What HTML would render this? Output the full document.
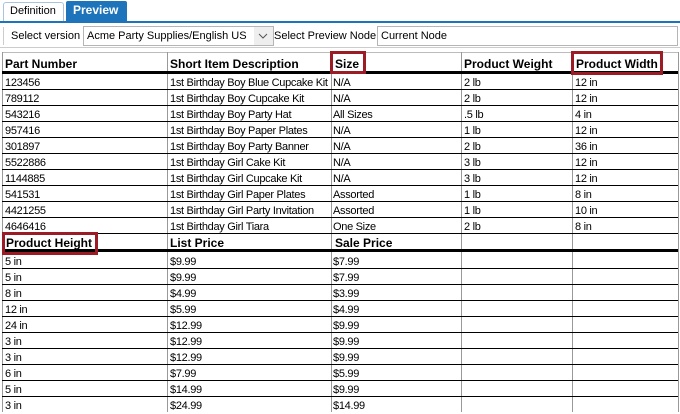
<!DOCTYPE html>
<html><head><meta charset="utf-8"><style>
*{margin:0;padding:0;box-sizing:border-box}
body{width:680px;height:412px;background:#fff;position:relative;overflow:hidden;font-family:"Liberation Sans",Tahoma,sans-serif;font-size:11px;color:#000}
.a{position:absolute;white-space:nowrap}
.t{letter-spacing:-0.3px}
.hl{position:absolute;left:2px;width:676px;height:1px;background:#000}
.vl{position:absolute;width:1px;background:#999}
.h{position:absolute;font-weight:bold;font-size:12px;white-space:nowrap}
.red{position:absolute;border:3px solid #9b1c24}
</style></head><body>
<!-- tabs -->
<div class="a" style="left:3px;top:2px;width:61px;height:20px;border:1px solid #a9c4dd;border-bottom:none;border-radius:3px 3px 0 0;background:#fff"></div>
<div class="a" style="left:10px;top:5px;font-size:11px">Definition</div>
<div class="a" style="left:66px;top:1px;width:61px;height:21px;background:#1d74bb;border-radius:2px 2px 0 0"></div>
<div class="a" style="left:73px;top:3px;color:#fff;font-weight:bold;font-size:12px">Preview</div>
<div class="a" style="left:0;top:21px;width:680px;height:2px;background:#1d74bb"></div>
<!-- toolbar -->
<div class="a" style="left:3px;top:27px;width:1px;height:18px;background:#ccc"></div>
<div class="a" style="left:11px;top:30px">Select version</div>
<div class="a" style="left:83px;top:26px;width:191px;height:20px;border:1px solid #b5b5b5;background:#fff"></div>
<div class="a" style="left:254px;top:27px;width:19px;height:18px;background:#eee"></div>
<div class="a" style="left:87px;top:30px">Acme Party Supplies/English US</div>
<svg class="a" style="left:258px;top:33px" width="10" height="7"><path d="M1 1 L5 5 L9 1" stroke="#555" fill="none"/></svg>
<div class="a" style="left:274px;top:30px">Select Preview Node</div>
<div class="a" style="left:377px;top:26px;width:301px;height:20px;border:1px solid #b5b5b5;background:#fff"></div>
<div class="a" style="left:381px;top:30px">Current Node</div>
<div class="a" style="left:0;top:47px;width:680px;height:1px;background:#ccc"></div>
<!-- table frame -->
<div class="a" style="left:2px;top:52px;width:676px;height:1px;background:#bbb"></div>
<div class="vl" style="left:2px;top:52px;height:360px"></div>
<div class="vl" style="left:167px;top:52px;height:360px"></div>
<div class="vl" style="left:331px;top:52px;height:360px"></div>
<div class="vl" style="left:461px;top:52px;height:360px"></div>
<div class="vl" style="left:572px;top:52px;height:360px"></div>
<div class="vl" style="left:678px;top:52px;height:360px"></div>
<!-- header 1 -->
<div class="h" style="left:5px;top:57px">Part Number</div>
<div class="h" style="left:170px;top:57px">Short Item Description</div>
<div class="h" style="left:335px;top:57px">Size</div>
<div class="h" style="left:464px;top:57px">Product Weight</div>
<div class="h" style="left:576px;top:57px">Product Width</div>
<div class="a" style="left:2px;top:71px;width:676px;height:3px;background:#000"></div>
<div class="red" style="left:330px;top:51px;width:36px;height:23px"></div>
<div class="red" style="left:571px;top:51px;width:92px;height:24px"></div>
<!-- rows 1 -->
<div class="hl" style="top:89px"></div><div class="hl" style="top:105px"></div><div class="hl" style="top:121px"></div><div class="hl" style="top:137px"></div><div class="hl" style="top:153px"></div><div class="hl" style="top:169px"></div><div class="hl" style="top:185px"></div><div class="hl" style="top:201px"></div><div class="hl" style="top:217px"></div><div class="hl" style="top:233px"></div>
<div class="a t" style="left:5px;top:75px;line-height:16px">123456<br>789112<br>543216<br>957416<br>301897<br>5522886<br>1144885<br>541531<br>4421255<br>4646416</div>
<div class="a t" style="left:170px;top:75px;line-height:16px">1st Birthday Boy Blue Cupcake Kit<br>1st Birthday Boy Cupcake Kit<br>1st Birthday Boy Party Hat<br>1st Birthday Boy Paper Plates<br>1st Birthday Boy Party Banner<br>1st Birthday Girl Cake Kit<br>1st Birthday Girl Cupcake Kit<br>1st Birthday Girl Paper Plates<br>1st Birthday Girl Party Invitation<br>1st Birthday Girl Tiara</div>
<div class="a t" style="left:333px;top:75px;line-height:16px">N/A<br>N/A<br>All Sizes<br>N/A<br>N/A<br>N/A<br>N/A<br>Assorted<br>Assorted<br>One Size</div>
<div class="a t" style="left:464px;top:75px;line-height:16px">2 lb<br>2 lb<br>.5 lb<br>1 lb<br>2 lb<br>3 lb<br>3 lb<br>1 lb<br>1 lb<br>2 lb</div>
<div class="a t" style="left:575px;top:75px;line-height:16px">12 in<br>12 in<br>4 in<br>12 in<br>36 in<br>12 in<br>12 in<br>8 in<br>10 in<br>8 in</div>
<!-- header 2 -->
<div class="h" style="left:6px;top:236px">Product Height</div>
<div class="h" style="left:170px;top:236px">List Price</div>
<div class="h" style="left:335px;top:236px">Sale Price</div>
<div class="a" style="left:2px;top:249px;width:676px;height:3px;background:#000"></div>
<div class="red" style="left:2px;top:232px;width:96px;height:23px"></div>
<!-- rows 2 -->
<div class="hl" style="top:268px"></div><div class="hl" style="top:284px"></div><div class="hl" style="top:300px"></div><div class="hl" style="top:316px"></div><div class="hl" style="top:332px"></div><div class="hl" style="top:348px"></div><div class="hl" style="top:364px"></div><div class="hl" style="top:380px"></div><div class="hl" style="top:396px"></div>
<div class="a t" style="left:5px;top:254px;line-height:16px">5 in<br>5 in<br>8 in<br>12 in<br>24 in<br>3 in<br>3 in<br>6 in<br>5 in<br>3 in</div>
<div class="a t" style="left:170px;top:254px;line-height:16px">$9.99<br>$9.99<br>$4.99<br>$5.99<br>$12.99<br>$12.99<br>$12.99<br>$7.99<br>$14.99<br>$24.99</div>
<div class="a t" style="left:333px;top:254px;line-height:16px">$7.99<br>$7.99<br>$3.99<br>$4.99<br>$9.99<br>$9.99<br>$9.99<br>$5.99<br>$9.99<br>$14.99</div>
</body></html>
